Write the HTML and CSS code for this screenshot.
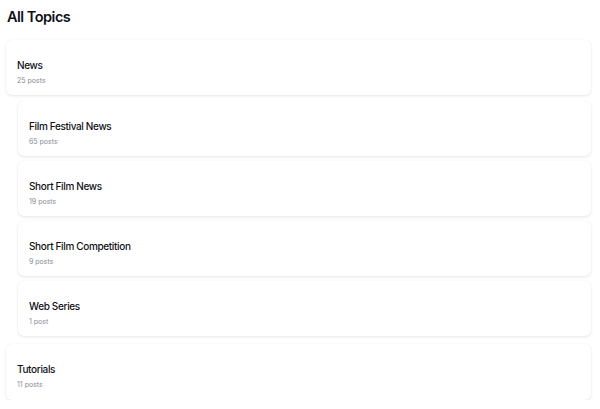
FILE: index.html
```html
<!DOCTYPE html>
<html>
<head>
<meta charset="utf-8">
<link rel="stylesheet" href="styles.css">
</head>
<body>
<div class="page">
  <h1 class="heading">All Topics</h1>
  <div class="topics">
    <div class="card">
      <div class="card-title">News</div>
      <div class="card-sub">25 posts</div>
    </div>
    <div class="children">
      <div class="card">
        <div class="card-title">Film Festival News</div>
        <div class="card-sub">65 posts</div>
      </div>
      <div class="card">
        <div class="card-title">Short Film News</div>
        <div class="card-sub">19 posts</div>
      </div>
      <div class="card">
        <div class="card-title">Short Film Competition</div>
        <div class="card-sub">9 posts</div>
      </div>
      <div class="card">
        <div class="card-title">Web Series</div>
        <div class="card-sub">1 post</div>
      </div>
    </div>
    <div class="card card-last">
      <div class="card-title">Tutorials</div>
      <div class="card-sub">11 posts</div>
    </div>
  </div>
</div>
</body>
</html>
```
FILE: styles.css
```css
* { box-sizing: border-box; }
html, body { margin: 0; padding: 0; background: #fff; }
body { font-family: Inter, "Noto Sans", sans-serif; color: #111118; }
.page { padding: 8px 9px 0 6px; }
.heading {
  margin: 0 0 0 1px;
  font-size: 14.5px;
  line-height: 18px;
  font-weight: 600;
  letter-spacing: -0.5px;
}
.topics { margin-top: 14px; display: flex; flex-direction: column; }
.children { display: flex; flex-direction: column; gap: 5px; padding-left: 12px; margin: 6px 0 8px; }
.card {
  background: #fff;
  border-radius: 6px;
  box-shadow: 0 1px 3px rgba(0,0,0,0.10), 0 0 1px rgba(0,0,0,0.06);
  padding: 19px 11px 8px;
  height: 55px;
}
.card-last { height: 56px; }
.card-title {
  font-size: 10px;
  line-height: 13px;
  font-weight: 500;
  letter-spacing: -0.35px;
}
.card-sub {
  margin-top: 3px;
  font-size: 7px;
  line-height: 12px;
  color: #8a8a94;
}
```
